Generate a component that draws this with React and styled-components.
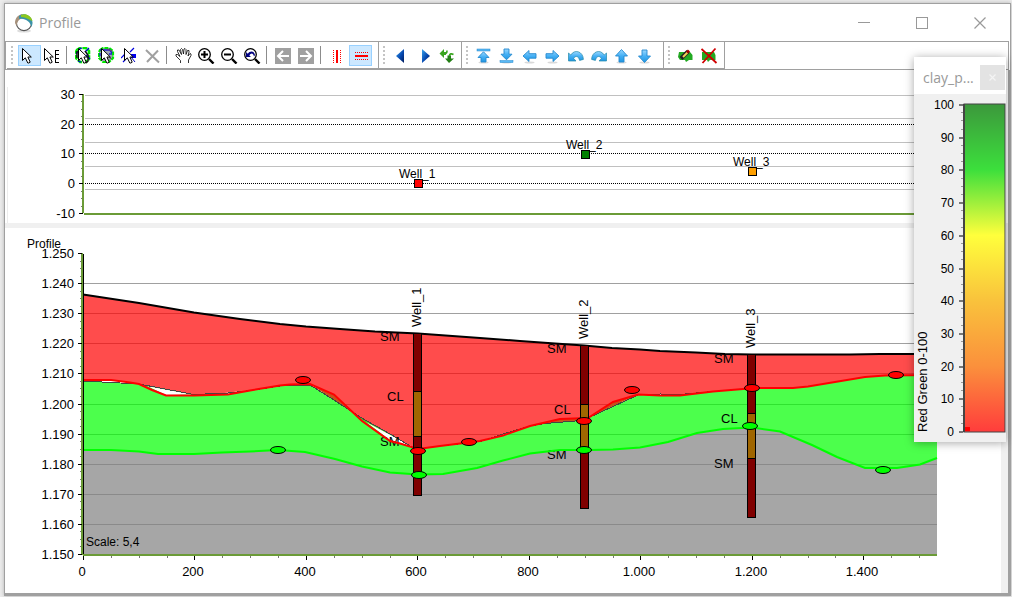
import React from 'react';
import styled, { createGlobalStyle } from 'styled-components';

const GlobalStyle = createGlobalStyle`
  * { box-sizing: border-box; }
  body { margin: 0; background: #ececec; font-family: "Liberation Sans", Arial, sans-serif; }
`;

const Desktop = styled.div`
  position: relative;
  display: flex;
  min-height: 100vh;
  padding: 3px 1px 1px 4px;
  background: #ececec;
`;

const Window = styled.main`
  flex: 1;
  min-width: 0;
  display: flex;
  flex-direction: column;
  background: #fff;
  border: 1px solid #a0a0a0;
  box-shadow: 0 0 4px rgba(0, 0, 0, 0.25);
`;

const TitleBar = styled.header`
  display: flex;
  align-items: center;
  height: 37px;
  padding: 0 1px 0 9px;
`;

const Title = styled.h1`
  flex: 1;
  margin: 0 0 0 5px;
  font: 400 14px/20px "Open Sans", "Noto Sans", sans-serif;
  color: #999;
`;

const CaptionButton = styled.button`
  display: flex;
  align-items: center;
  justify-content: center;
  width: 58px;
  height: 36px;
  padding: 0;
  border: 0;
  background: transparent;
`;

const ToolBar = styled.div`
  display: flex;
  height: 29px;
  margin-right: 1px;
  padding-left: 1px;
  border: 1px solid #a0a0a0;
`;

const Band = styled.div`
  display: flex;
  align-items: center;
  padding: 0 ${(p) => p.$end}px 0 4px;
  border-right: 1px solid #a0a0a0;
  border-bottom: 1px solid #a0a0a0;
`;

const Grip = styled.span`
  width: 2px;
  height: 19px;
  margin-right: 5px;
  background: repeating-linear-gradient(#c4c4c4 0 2px, transparent 2px 4px);
`;

const ToolButton = styled.button`
  display: flex;
  align-items: center;
  justify-content: center;
  width: 23px;
  height: 21px;
  padding: 0;
  border: 1px solid ${(p) => (p.$active ? '#99d1ff' : 'transparent')};
  background: ${(p) => (p.$active ? '#cce8ff' : 'transparent')};

  svg { flex: none; }
`;

const Separator = styled.span`
  width: 1px;
  height: 18px;
  margin: 0 5px 0 2px;
  background: #8c8c8c;
`;

const Workspace = styled.div`
  flex: 1;
  display: flex;
  flex-direction: column;
  border: solid #a0a0a0;
  border-width: 0 2px 2px 0;
`;

const ChartPane = styled.section`
  flex: ${(p) => (p.$grow ? 1 : 'none')};
  border-right: ${(p) => (p.$grow ? '7px solid #f0f0f0' : '0')};
`;

const Splitter = styled.div`
  height: 5px;
  background: #f0f0f0;
`;

const Chart = styled.svg`
  display: block;
  width: 100%;
  height: ${(p) => p.$height}px;
  font-family: "Liberation Sans", Arial, sans-serif;
  font-size: 13px;
  fill: #000;
`;

const Palette = styled.aside`
  position: absolute;
  top: 57px;
  right: 6px;
  width: 92px;
  background: #f0f0f0;
  box-shadow: 0 1px 9px rgba(0, 0, 0, 0.35);
`;

const PaletteHeader = styled.div`
  display: flex;
  align-items: center;
  justify-content: space-between;
  height: 37px;
  padding: 4px 1px 0 9px;
  background: #fff;
`;

const PaletteTitle = styled.h2`
  margin: 0;
  font: 400 14px/20px "Open Sans", "Noto Sans", sans-serif;
  color: #999;
`;

const PaletteClose = styled.button`
  display: flex;
  align-items: center;
  justify-content: center;
  width: 25px;
  height: 25px;
  padding: 0;
  border: 0;
  background: #e3e3e3;
`;

/* ---------- icons ---------- */

const Icon = ({ children, left = 0 }) => (
  <svg width="17" height="17" viewBox={`${left} 0 17 17`} fill="none" aria-hidden="true">{children}</svg>
);

const Pointer = ({ x = 0 }) => (
  <path
    transform={`translate(${x} 0)`}
    d="M1.5 1.5V13.5L4.3 10.8L6.8 16H7.8L9.2 15.2L6.9 10H10.3Z"
    fill="#fff" stroke="#000"
  />
);

const Lens = ({ children }) => (
  <Icon left={1}>
    <circle cx="7.5" cy="7.5" r="5.8" fill="#fff" stroke="#000" strokeWidth="1.3" />
    <path d="M12 12L16.5 16.5" stroke="#000" strokeWidth="2.4" />
    {children}
  </Icon>
);

const Blue = ({ d, bar }) => (
  <Icon left={1}>
    <ellipse cx="8.5" cy="15.6" rx="5" ry="1" fill="#000" opacity=".15" />
    <path d={d} fill="url(#sky)" stroke="#2489cf" strokeWidth=".9" strokeLinejoin="round" />
    {bar && <rect x="2" y={bar} width="13" height="2" fill="#58b9f5" stroke="#2489cf" strokeWidth=".5" />}
  </Icon>
);

const Turn = ({ flip }) => (
  <Icon left={1}>
    <g transform={flip ? 'translate(18 0) scale(-1 1)' : undefined}>
      <path d="M1.5 6V14H9L6.7 11.5C8 8.7 11.5 8.4 12.6 13.4L16.4 12.4C16 4.2 7.5 1.8 3.8 8Z" fill="url(#sky)" stroke="#2489a8" strokeWidth=".7" />
    </g>
  </Icon>
);

const icons = {
  select: <Icon><Pointer /></Icon>,
  selectElevation: <Icon><Pointer x={-1} /><path d="M11.5 3V16M11.5 3.5H15M11.5 7.5H15M11.5 11.5H15M11.5 15.5H15" stroke="#000" /></Icon>,
  editLayer: (
    <Icon left={1}>
      <path d="M3 3L6 1H12L15 4V12L12 15H6L2 11V5Z" fill="#fff" stroke="#00e800" strokeWidth="2.6" strokeDasharray="5 1" />
      <path d="M2 7L6 2M5 2L8 1M11 5L15 1M12 8L16 12M4 14L7 15" stroke="#0000e0" strokeWidth="1.2" />
      <path d="M3 4V11M11 4L14 8V14L12 16" stroke="#111" strokeWidth="1.5" />
      <Pointer x={3} />
    </Icon>
  ),
  editPolygon: (
    <Icon left={1}>
      <path d="M3 3L6 1H12L16 4V11L12 15H6L2 11V5Z" fill="#a2a6b6" stroke="#00e800" strokeWidth="2.2" strokeDasharray="4 1" />
      <path d="M3 3H13M12 2L15 6M12 7H15M3 6V9" stroke="#2020d0" strokeWidth="1.4" />
      <path d="M10 2L15 4M12 9L14 12" stroke="#704070" strokeWidth="1.2" />
      <Pointer x={3} />
    </Icon>
  ),
  editPoint: (
    <Icon left={1}>
      <path d="M1 11L6 6M10 5L14 1M3 15L6 12" stroke="#0000e0" strokeWidth="1.2" />
      <rect x="11" y="7" width="5" height="4" fill="#0000f0" />
      <path d="M11 10L15 15" stroke="#0000c0" />
      <Pointer x={3} />
    </Icon>
  ),
  remove: <Icon><path d="M2 3L15 15.5M14 3.5L3 15" stroke="#a0a0a0" strokeWidth="2" /></Icon>,
  pan: (
    <Icon>
      <path d="M5.5 16V13.5L1 9V7.5H2.5L5 9.5L2.5 4.5V3H4L6.5 7.5L5.5 2.5L6.5 1.5L7.5 2.5L8.5 7L9 2L10 1.5L11 2.5V7.5L12.5 3.5H14V5L13 9L15 6.5L16 7V8.5L13.5 13V16" fill="#fff" stroke="#000" strokeWidth=".8" />
    </Icon>
  ),
  zoomIn: <Lens><path d="M4 7.5H11M7.5 4V11" stroke="#000" strokeWidth="2" /></Lens>,
  zoomOut: <Lens><path d="M4 7.5H11" stroke="#000" strokeWidth="2" /></Lens>,
  zoomBack: <Lens><path d="M3 5V10H8L6.4 8.5C8 6 10 5.6 11 9.5L12 8C11 3.5 7 3.5 4.8 6.8Z" fill="#000080" /></Lens>,
  back: <Icon><rect y="1" width="16" height="16" fill="#a0a0a0" /><path d="M14 9H3M8 4L3 9L8 14" stroke="#fff" strokeWidth="2" /></Icon>,
  forward: <Icon><rect y="1" width="16" height="16" fill="#a0a0a0" /><path d="M2 9H13M8 4L13 9L8 14" stroke="#fff" strokeWidth="2" /></Icon>,
  vertical: <Icon><path d="M4.5 3V16M11.5 3V16" stroke="red" strokeDasharray="1 1" /><path d="M8 3V16" stroke="red" strokeWidth="2" /></Icon>,
  horizontal: <Icon><path d="M3 5.5H16M3 12.5H16" stroke="red" strokeDasharray="1 1" /><path d="M3 9H16" stroke="red" strokeWidth="2" /></Icon>,
  previous: <Icon><path d="M11 2V16L3 9Z" fill="url(#navy)" /></Icon>,
  next: <Icon><path d="M6 2V16L14 9Z" fill="url(#navy)" /></Icon>,
  refresh: (
    <Icon left={1}>
      <path d="M6 2L1.5 6.5L6 11V8H8V5H6Z" fill="#39a51f" />
      <path d="M7.5 6.5C9 6.5 9 5 9 3.5" stroke="#39a51f" strokeWidth="1.6" />
      <path d="M11 16L7 11.5H9.5V8.5H13V11.5H16Z" fill="#237f16" />
      <path d="M11.5 9C11.5 6.5 13.5 6.5 15.5 7.5" stroke="#39a51f" strokeWidth="1.8" />
    </Icon>
  ),
  top: <Blue bar={2} d="M8.5 4.8L14 10.5H11V15H6V10.5H3Z" />,
  bottom: <Blue bar={13.5} d="M8.5 12.8L14 7.2H11V2H6V7.2H3Z" />,
  left: <Blue d="M2 9L8 3.5V6.7H15V11.2H8V14.5Z" />,
  right: <Blue d="M15 9L9 3.5V6.7H2V11.2H9V14.5Z" />,
  undo: <Turn />,
  redo: <Turn flip />,
  up: <Blue d="M8.5 2.5L14.5 9H11V15H6V9H2.5Z" />,
  down: <Blue d="M8.5 15.5L14.5 9H11V3H6V9H2.5Z" />,
  edit: (
    <Icon left={1}>
      <path d="M2 5H13L15.5 8V13H12L9 15L8 13H3L1 10Z" fill="#22a922" />
      <path d="M4 11.5L11 4.5" stroke="#222" strokeWidth="4" />
      <path d="M6 10L10.5 5.5" stroke="#f2cf55" strokeWidth="2" />
      <path d="M10 5.5L12 3.5" stroke="#a00000" strokeWidth="3" />
    </Icon>
  ),
  discard: (
    <Icon left={1}>
      <path d="M2 5H14L15.5 8V13H10L8 15L7 13H2Z" fill="#22a922" />
      <path d="M1.5 2L16.5 16M15.5 1.5L2.5 16" stroke="#d00000" strokeWidth="1.8" />
    </Icon>
  ),
};

const SharedGradients = () => (
  <svg width="0" height="0" aria-hidden="true">
    <defs>
      <linearGradient id="sky" x2="0" y2="1"><stop stopColor="#9ad8ff" /><stop offset=".5" stopColor="#45b0f5" /><stop offset="1" stopColor="#2196e0" /></linearGradient>
      <linearGradient id="navy" x2="1" y2="1"><stop stopColor="#38a5ee" /><stop offset=".55" stopColor="#0648b0" /><stop offset="1" stopColor="#001a58" /></linearGradient>
    </defs>
  </svg>
);

const bands = [
  { end: 6, groups: [
    [['select', 'Select', true], ['selectElevation', 'Select elevation']],
    [['editLayer', 'Edit layer'], ['editPolygon', 'Edit polygon'], ['editPoint', 'Edit point'], ['remove', 'Delete']],
    [['pan', 'Pan'], ['zoomIn', 'Zoom in'], ['zoomOut', 'Zoom out'], ['zoomBack', 'Previous zoom']],
    [['back', 'Back'], ['forward', 'Forward']],
    [['vertical', 'Vertical'], ['horizontal', 'Horizontal', true]],
  ] },
  { end: 2, groups: [[['previous', 'Previous profile'], ['next', 'Next profile'], ['refresh', 'Refresh']]] },
  { end: 6, groups: [[['top', 'To top'], ['bottom', 'To bottom'], ['left', 'Move left'], ['right', 'Move right'], ['undo', 'Rotate left'], ['redo', 'Rotate right'], ['up', 'Move up'], ['down', 'Move down']]] },
  { end: 3, groups: [[['edit', 'Edit'], ['discard', 'Discard edits']]] },
];

/* ---------- plan view ---------- */

const range = (n) => Array.from({ length: n }, (_, i) => i);

const planTicks = [[30, 24], [20, 54], [10, 83], [0, 113], [-10, 143]];
const planWells = [
  { name: 'Well_1', x: 409, y: 109, color: '#f00' },
  { name: 'Well_2', x: 576, y: 80, color: '#008000' },
  { name: 'Well_3', x: 743, y: 97, color: '#ffa000' },
];

const PlanChart = () => (
  <Chart $height={153} role="img" aria-label="Well offsets along the profile">
    <g shapeRendering="crispEdges">
      <rect x="2" y="17" width="1" height="136" fill="#ececec" />
      {[25, 48, 72, 96, 119].map((y) => <rect key={y} x="80" y={y} width="852" height="1" fill="#c0c0c0" />)}
      {[54, 83, 113].map((y) => <path key={y} d={`M80 ${y + 0.5}H932`} stroke="#000" strokeDasharray="1 1" />)}
      <rect x="77" y="24" width="2" height="119" fill="#6b9b37" />
      <rect x="79" y="143" width="853" height="2" fill="#6b9b37" />
      {planTicks.map(([v, y]) => <rect key={v} x="74" y={y} width="4" height="1" />)}
      {range(16).filter((i) => i % 4).map((i) => <rect key={i} x="76" y={Math.round(24 + i * 7.44)} width="1" height="1" fill="#777" />)}
    </g>
    {planTicks.map(([v, y]) => <text key={v} x="70" y={y + 5} textAnchor="end">{v}</text>)}
    {planWells.map((w) => (
      <g key={w.name}>
        <rect x={w.x + 0.5} y={w.y + 0.5} width="8" height="8" fill={w.color} stroke="#000" />
        <text x={w.x - 15} y={w.y - 1} fontSize="12">{w.name}</text>
      </g>
    ))}
  </Chart>
);

/* ---------- cross section ---------- */

const surface = '83,294.5 139,303 194,312.5 240,319 280,324 306,326.5 340,329 375,331.5 418,333.5 480,338 520,341 555,343.5 584,345.5 612,348 640,349.5 660,351 696,352.5 725,354 752,354.5 850,354.5 880,354 937,354';
const redBase = '83,380 111,380 130,382.5 139,384 152,390 166,395.5 194,395.5 228,394.5 250,390.5 280,385.5 290,384.5 310,384 334,394.5 362,421 390,441 400,443.5 418,449 440,446 460,443.5 480,441 503,435.5 530,426 560,419 588,418 613,402 638,394.5 660,395.5 680,395.5 713,391.5 743,389 760,388 793,388 808,386.5 865,377 885,375.5 937,375';
const greenTop = '83,381 139,384 194,394.5 228,393 250,390.5 280,386 310,385 334,400 360,417 390,434 412,447 418,449 440,446 480,441.5 503,434 530,426 545,423.5 575,421 588,418 638,395 660,394 680,394.5 713,391.5 743,389 760,388 793,388 808,386.5 865,377 885,375.5 937,375';
const greenBase = '83,450 111,450 139,451.5 158,454 194,454 222,452.5 250,451.5 278,450 305,452 335,459 362,466.5 390,472.5 418,474.5 443,474 477,468 503,460.5 530,453.5 560,450 590,450 613,449.5 640,447.5 668,442 697,433 723,429 752,427.5 780,431.5 812,445 837,457 865,468 897,468 920,464.5 937,458';
const reversed = (pts) => pts.split(' ').reverse().join(' ');

const elevations = ['1.250', '1.240', '1.230', '1.220', '1.210', '1.200', '1.190', '1.180', '1.170', '1.160', '1.150'];
const distances = ['0', '200', '400', '600', '800', '1.000', '1.200', '1.400'];
const elevationY = (i) => Math.round(253 + i * 30.1);
const distanceX = (i) => Math.round(83 + i * 27.87);

const wells = [
  { name: 'Well_1', x: 413, top: 333, cl: 391, clEnd: 436, end: 496, labels: [341, 401, 446], nameY: 327 },
  { name: 'Well_2', x: 580, top: 345, cl: 404, clEnd: 448, end: 509, labels: [353, 414, 459], nameY: 339 },
  { name: 'Well_3', x: 747, top: 354, cl: 413, clEnd: 458, end: 518, labels: [363, 423, 468], nameY: 348 },
];
const redNodes = [[303, 380], [418, 451], [469, 442], [584, 421], [632, 390], [752, 388], [896, 375]];
const greenNodes = [[278, 450], [419, 475], [584, 450], [750, 426], [883, 470]];

const Nodes = ({ points, color }) => points.map(([x, y]) => (
  <ellipse key={x} cx={x} cy={y} rx="7.5" ry="3.5" fill={color} stroke="#000" />
));

const SectionChart = () => (
  <Chart $height={365} role="img" aria-label="Geological profile">
    <g transform="translate(-5 -228)">
      <g shapeRendering="crispEdges">
        {range(9).map((i) => <rect key={i} x="84" y={elevationY(i + 1)} width="853" height="1" fill="#a0a0a0" />)}
      </g>
      <g fillOpacity=".7">
        <polygon points={`${surface} ${reversed(redBase)}`} fill="#f00" />
        <polygon points={`${greenTop} ${reversed(greenBase)}`} fill="#0f0" />
        <polygon points={`${greenBase} 937,554 83,554`} fill="#808080" />
      </g>
      <g fill="#fff">
        <polygon points="147,386 192,394.5 166,395" />
        <polygon points="211,394.5 238,391.5 228,394" />
        <polygon points="366,422 413,447 400,443 390,440" />
        <polygon points="486,439 508,432.5 500,436" />
        <polygon points="660,394 677,394 677,395.5 660,395.5" />
      </g>
      <g fill="#c8501c">
        <polygon points="310,384 334,394.5 360,418 334,400" />
        <polygon points="530,426 560,419 588,418 575,421 545,423.5" />
        <polygon points="588,418 613,402 638,394.5" />
      </g>
      <polyline points={greenTop} fill="none" stroke="#444" shapeRendering="crispEdges" />
      {wells.map((w) => (
        <g key={w.name}>
          <text x={w.x - 33} y={w.labels[0]}>SM</text>
          <text x={w.x - 26} y={w.labels[1]}>CL</text>
          <text x={w.x - 33} y={w.labels[2]}>SM</text>
        </g>
      ))}
      <g fill="none" strokeWidth="2">
        <polyline points={surface} stroke="#000" />
        <polyline points={redBase} stroke="#f00" />
        <polyline points={greenBase} stroke="#0f0" />
      </g>
      {wells.map((w) => (
        <g key={w.name}>
          <g stroke="#000" fill="#800000" shapeRendering="crispEdges">
            <rect x={w.x + 0.5} y={w.top + 0.5} width="8" height={w.end - w.top - 1} />
            <rect x={w.x + 0.5} y={w.cl + 0.5} width="8" height={w.clEnd - w.cl} fill="#a06600" />
          </g>
          <text transform={`translate(${w.x + 8} ${w.nameY}) rotate(-90)`}>{w.name}</text>
        </g>
      ))}
      <Nodes points={redNodes} color="#f00" />
      <Nodes points={greenNodes} color="#0f0" />
      <g shapeRendering="crispEdges">
        <rect x="81" y="253" width="2" height="302" fill="#6b9b37" />
        <rect x="83" y="254" width="1" height="300" />
        <rect x="83" y="554" width="854" height="2" fill="#6b9b37" />
        {elevations.map((v, i) => <rect key={v} x="78" y={elevationY(i)} width="4" height="1" />)}
        {range(40).filter((i) => i % 4).map((i) => <rect key={i} x="80" y={Math.round(253 + i * 7.525)} width="1" height="1" fill="#777" />)}
        {range(31).map((i) => <rect key={i} x={distanceX(i)} y="556" width="1" height={i % 4 ? 2 : 4} fill={i % 4 ? '#777' : '#000'} />)}
      </g>
      {elevations.map((v, i) => <text key={v} x="74" y={elevationY(i) + 5} textAnchor="end">{v}</text>)}
      {distances.map((v, i) => <text key={v} x={distanceX(i * 4) - 1} y="576" textAnchor="middle">{v}</text>)}
      <text x="27" y="248" fontSize="12">Profile</text>
      <text x="86" y="546" fontSize="12">Scale: 5,4</text>
    </g>
  </Chart>
);

/* ---------- colour legend ---------- */

const legendStops = [['0', '#3c983c'], ['.2', '#3cdf3c'], ['.4', '#ffff3c'], ['.6', '#f9c23c'], ['.8', '#fb903c'], ['1', '#ff3c3c']];
const legendY = (v) => Math.round(337 - v * 3.27);

const Legend = () => (
  <Chart $height={348} role="img" aria-label="Red Green 0-100 colour scale">
    <defs>
      <linearGradient id="scale" x2="0" y2="1">
        {legendStops.map(([o, c]) => <stop key={o} offset={o} stopColor={c} />)}
      </linearGradient>
    </defs>
    <rect x="50" y="10" width="41" height="328" fill="url(#scale)" stroke="#444" />
    <rect x="49" y="10" width="2" height="328" fill="#444" />
    <rect x="51" y="333" width="5" height="4" fill="#f00" />
    <g shapeRendering="crispEdges">
      {range(11).map((i) => <rect key={i} x="45" y={legendY(i * 10)} width="4" height="2" fill="#777" />)}
      {range(40).filter((i) => i % 4).map((i) => <rect key={i} x="47" y={legendY(i * 2.5)} width="2" height="1" fill="#999" />)}
    </g>
    {range(11).map((i) => <text key={i} x="40" y={legendY(i * 10) + 5} fontSize="12" textAnchor="end">{i * 10}</text>)}
    <text transform="translate(13 338) rotate(-90)">Red Green 0-100</text>
  </Chart>
);

const Logo = () => (
  <svg width="20" height="20" viewBox="0 0 20 20" aria-hidden="true">
    <ellipse cx="10" cy="18" rx="7" ry="1.6" fill="#ddd" />
    <circle cx="10" cy="10" r="7.6" fill="#fff" stroke="#555" strokeWidth="1.2" />
    <path d="M1 10C1 5 4 2 8 1L9 5C5 6 3.5 8 2.5 13Z" fill="#a6917c" />
    <path d="M5 3C9 0 13 1 16 4C19 7 19 11 17.5 14C16 9 12 5 5 6Z" fill="#3a93a8" />
    <path d="M7 2C11 0 17 2 18.5 8C15 7 12 4 7 4Z" fill="#8cc81e" />
  </svg>
);

export default function App() {
  return (
    <Desktop>
      <GlobalStyle />
      <Window>
        <TitleBar>
          <Logo />
          <Title>Profile</Title>
          <CaptionButton aria-label="Minimize"><svg width="12" height="12"><path d="M0 5.5H12" stroke="#999" /></svg></CaptionButton>
          <CaptionButton aria-label="Maximize"><svg width="12" height="12"><rect x=".5" y=".5" width="11" height="11" fill="none" stroke="#999" /></svg></CaptionButton>
          <CaptionButton aria-label="Close"><svg width="12" height="12"><path d="M.5 .5L11.5 11.5M11.5 .5L.5 11.5" stroke="#999" strokeWidth="1.2" /></svg></CaptionButton>
        </TitleBar>
        <ToolBar role="toolbar" aria-label="Profile tools">
          {bands.map((band, b) => (
            <Band key={b} $end={band.end}>
              <Grip />
              {band.groups.map((group, g) => (
                <React.Fragment key={g}>
                  {g > 0 && <Separator />}
                  {group.map(([id, label, active]) => (
                    <ToolButton key={id} $active={active} aria-label={label} aria-pressed={Boolean(active)}>{icons[id]}</ToolButton>
                  ))}
                </React.Fragment>
              ))}
            </Band>
          ))}
          <SharedGradients />
        </ToolBar>
        <Workspace>
          <ChartPane><PlanChart /></ChartPane>
          <Splitter />
          <ChartPane $grow><SectionChart /></ChartPane>
        </Workspace>
      </Window>
      <Palette>
        <PaletteHeader>
          <PaletteTitle>clay_p...</PaletteTitle>
          <PaletteClose aria-label="Close legend"><svg width="7" height="7"><path d="M.5 .5L6.5 6.5M6.5 .5L.5 6.5" stroke="#f4f4f4" strokeWidth="1.2" /></svg></PaletteClose>
        </PaletteHeader>
        <Legend />
      </Palette>
    </Desktop>
  );
}
